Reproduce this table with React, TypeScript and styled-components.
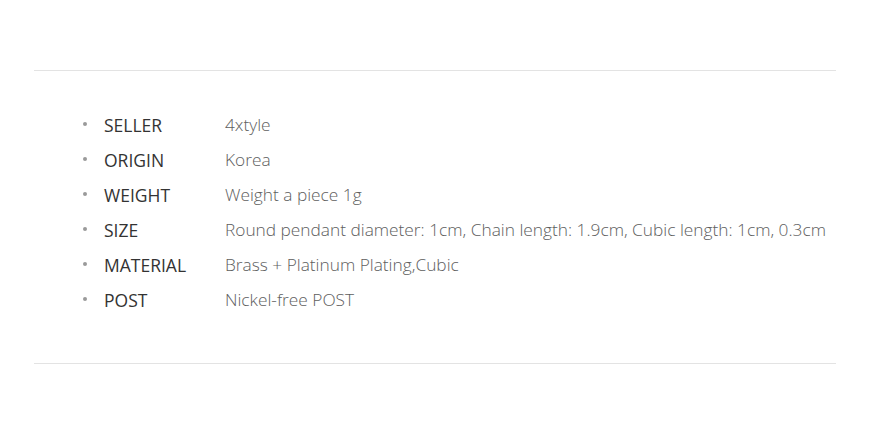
import React from "react";
import styled, { createGlobalStyle } from "styled-components";

const Global = createGlobalStyle`
  html, body { margin: 0; padding: 0; background: #fff; }
  body { font-family: "Open Sans", "Liberation Sans", sans-serif; }
`;

const Page = styled.div`
  padding: 70px 37px 0 34px;
`;

const Section = styled.section`
  border-top: 1px solid #e3e3e3;
  border-bottom: 1px solid #e3e3e3;
  padding: 36px 0 46px 0;
`;

const List = styled.ul`
  list-style: none;
  margin: 0;
  padding: 0 0 0 49px;
  display: flex;
  flex-direction: column;
`;

const Row = styled.li`
  display: grid;
  grid-template-columns: 21px 121px 1fr;
  align-items: center;
  height: 35px;
`;

const Bullet = styled.span`
  width: 4px;
  height: 4px;
  border-radius: 50%;
  background: #9a9a9a;
  margin-top: -2px;
`;

const Label = styled.span`
  font-size: 17.5px;
  color: #333;
  font-weight: 400;
`;

const Value = styled.span`
  font-size: 17.3px;
  color: #5e5e5e;
  font-weight: 300;
  white-space: nowrap;
`;

const rows: [string, string][] = [
  ["SELLER", "4xtyle"],
  ["ORIGIN", "Korea"],
  ["WEIGHT", "Weight a piece 1g"],
  ["SIZE", "Round pendant diameter: 1cm, Chain length: 1.9cm, Cubic length: 1cm, 0.3cm"],
  ["MATERIAL", "Brass + Platinum Plating,Cubic"],
  ["POST", "Nickel-free POST"],
];

export default function App() {
  return (
    <Page>
      <Global />
      <Section>
        <List>
          {rows.map(([k, v]) => (
            <Row key={k}>
              <Bullet />
              <Label>{k}</Label>
              <Value>{v}</Value>
            </Row>
          ))}
        </List>
      </Section>
    </Page>
  );
}
